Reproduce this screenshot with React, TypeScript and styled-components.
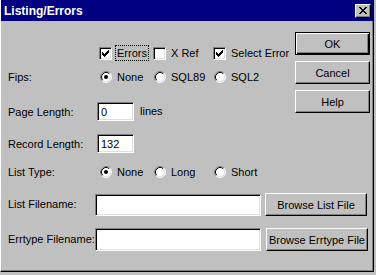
import styled, { createGlobalStyle } from "styled-components";

const GlobalStyle = createGlobalStyle`
  * { box-sizing: border-box; }
  body {
    margin: 0;
    background: #c0c0c0;
    font-family: "Liberation Sans", Arial, sans-serif;
    font-size: 11px;
    color: #000;
  }
`;

const Window = styled.div`
  width: 374px;
  height: 272px;
  background: #c0c0c0;
  border-left: 1px solid #fff;
  border-right: 1px solid #000;
  border-bottom: 1px solid #000;
  box-shadow: inset -1px -1px 0 #808080;
  display: flex;
  flex-direction: column;
`;

const TitleBar = styled.div`
  height: 21px;
  background: #000080;
  color: #fff;
  display: flex;
  align-items: center;
  justify-content: space-between;
  padding: 0 2px 0 3px;
`;

const Title = styled.span`
  font-weight: bold;
  font-size: 12px;
`;

const CloseButton = styled.div`
  width: 16px;
  height: 14px;
  background: #c0c0c0;
  border: 1px solid;
  border-color: #fff #000 #000 #fff;
  box-shadow: inset -1px -1px 0 #808080;
  display: flex;
  align-items: center;
  justify-content: center;
  padding-right: 1px;
`;

const Body = styled.div`
  flex: 1;
  padding: 0 3px 0 7px;
  display: flex;
  flex-direction: column;
`;

const Top = styled.div`
  display: flex;
  justify-content: space-between;
`;

const FormColumn = styled.div`
  display: flex;
  flex-direction: column;
  padding-top: 23px;
`;

const ButtonColumn = styled.div`
  width: 75px;
  padding-top: 11px;
  display: flex;
  flex-direction: column;
  gap: 6px;
`;

const Row = styled.div<{ $top: number; $h: number }>`
  display: flex;
  align-items: center;
  margin-top: ${(p) => p.$top}px;
  height: ${(p) => p.$h}px;
`;

const Label = styled.span<{ $w: number }>`
  flex: none;
  width: ${(p) => p.$w}px;
  white-space: nowrap;
  overflow: visible;
  padding-bottom: ${(p) => (p.$w > 88 ? 0 : 2)}px;
`;

const Options = styled.div`
  display: grid;
  grid-template-columns: 54px 60px auto;
  align-items: center;
  margin-left: 2px;
`;

const Option = styled.label`
  display: flex;
  align-items: center;
  white-space: nowrap;
`;

const Box = styled.span`
  width: 13px;
  height: 13px;
  background: #fff;
  border: 1px solid;
  border-color: #808080 #fff #fff #808080;
  box-shadow: inset 1px 1px 0 #000, inset -1px -1px 0 #dfdfdf;
  display: flex;
  align-items: center;
  justify-content: center;
  margin-left: -1px;
  margin-right: 5px;
`;

const Focus = styled.span`
  outline: 1px dotted #000;
  outline-offset: 0;
  padding: 1px 1px;
  margin-left: -1px;
`;

const Field = styled.div<{ $w: number; $h: number }>`
  flex: none;
  width: ${(p) => p.$w}px;
  height: ${(p) => p.$h}px;
  background: #fff;
  border: 1px solid;
  border-color: #808080 #fff #fff #808080;
  box-shadow: inset 1px 1px 0 #000, inset -1px -1px 0 #dfdfdf;
  padding: 1px 3px 0;
  display: flex;
  align-items: center;
`;

const Unit = styled.span`
  margin-left: 6px;
  padding-bottom: 2px;
`;

const Button = styled.div<{ $default?: boolean; $w?: number; $gap?: number }>`
  width: ${(p) => (p.$w ? `${p.$w}px` : "100%")};
  height: 23px;
  margin-left: ${(p) => p.$gap ?? 0}px;
  background: #c0c0c0;
  border: 1px solid;
  border-color: ${(p) => (p.$default ? "#000" : "#fff #000 #000 #fff")};
  box-shadow: ${(p) =>
    p.$default
      ? "inset 1px 1px 0 #fff, inset -1px -1px 0 #000, inset -2px -2px 0 #808080"
      : "inset -1px -1px 0 #808080"};
  display: flex;
  align-items: center;
  justify-content: center;
  white-space: nowrap;
  flex: none;
`;

const Radio = ({ on }: { on?: boolean }) => (
  <svg width="12" height="12" viewBox="0 0 12 12" style={{ marginRight: 5, flexShrink: 0 }}>
    <circle cx="6" cy="6" r="5" fill="#fff" />
    <path d="M2.11 9.89 A5.5 5.5 0 0 1 9.89 2.11" fill="none" stroke="#808080" />
    <path d="M2.82 9.18 A4.5 4.5 0 0 1 9.18 2.82" fill="none" stroke="#000" />
    <path d="M9.89 2.11 A5.5 5.5 0 0 1 2.11 9.89" fill="none" stroke="#fff" />
    <path d="M9.18 2.82 A4.5 4.5 0 0 1 2.82 9.18" fill="none" stroke="#dfdfdf" />
    {on ? <circle cx="6" cy="6" r="2" fill="#000" /> : null}
  </svg>
);

const Check = ({ on }: { on?: boolean }) => (
  <Box>
    {on ? (
      <svg width="7" height="7" viewBox="0 0 7 7">
        <path
          d="M0 2H1V3H2V4H3V3H4V2H5V1H6V0H7V3H6V4H5V5H4V6H3V7H2V6H1V5H0Z"
          fill="#000"
        />
      </svg>
    ) : null}
  </Box>
);

export default function App() {
  return (
    <>
      <GlobalStyle />
      <Window>
        <TitleBar>
          <Title>Listing/Errors</Title>
          <CloseButton>
            <svg width="8" height="7" viewBox="0 0 8 7">
              <path
                d="M0 0h2v1h-2zM6 0h2v1h-2zM1 1h2v1h-2zM5 1h2v1h-2zM2 2h4v1h-4zM3 3h2v1h-2zM2 4h4v1h-4zM1 5h2v1h-2zM5 5h2v1h-2zM0 6h2v1h-2zM6 6h2v1h-2z"
                fill="#000"
              />
            </svg>
          </CloseButton>
        </TitleBar>
        <Body>
          <Top>
            <FormColumn>
              <Row $top={0} $h={18}>
                <Label $w={90} />
                <Options>
                  <Option>
                    <Check on />
                    <Focus>Errors</Focus>
                  </Option>
                  <Option>
                    <Check />
                    X Ref
                  </Option>
                  <Option>
                    <Check on />
                    Select Error
                  </Option>
                </Options>
              </Row>
              <Row $top={6} $h={18}>
                <Label $w={90}>Fips:</Label>
                <Options>
                  <Option>
                    <Radio on />
                    None
                  </Option>
                  <Option>
                    <Radio />
                    SQL89
                  </Option>
                  <Option>
                    <Radio />
                    SQL2
                  </Option>
                </Options>
              </Row>
              <Row $top={16} $h={19}>
                <Label $w={89}>Page Length:</Label>
                <Field $w={37} $h={19}>0</Field>
                <Unit>lines</Unit>
              </Row>
              <Row $top={13} $h={19}>
                <Label $w={89}>Record Length:</Label>
                <Field $w={37} $h={19}>132</Field>
              </Row>
              <Row $top={10} $h={18}>
                <Label $w={90}>List Type:</Label>
                <Options>
                  <Option>
                    <Radio on />
                    None
                  </Option>
                  <Option>
                    <Radio />
                    Long
                  </Option>
                  <Option>
                    <Radio />
                    Short
                  </Option>
                </Options>
              </Row>
            </FormColumn>
            <ButtonColumn>
              <Button $default>OK</Button>
              <Button>Cancel</Button>
              <Button>Help</Button>
            </ButtonColumn>
          </Top>
          <Row $top={12} $h={23}>
            <Label $w={87}>List Filename:</Label>
            <Field $w={166} $h={22} />
            <Button $w={102} $gap={4}>Browse List File</Button>
          </Row>
          <Row $top={12} $h={23}>
            <Label $w={87}>Errtype Filename:</Label>
            <Field $w={166} $h={23} />
            <Button $w={102} $gap={5}>Browse Errtype File</Button>
          </Row>
        </Body>
      </Window>
    </>
  );
}
